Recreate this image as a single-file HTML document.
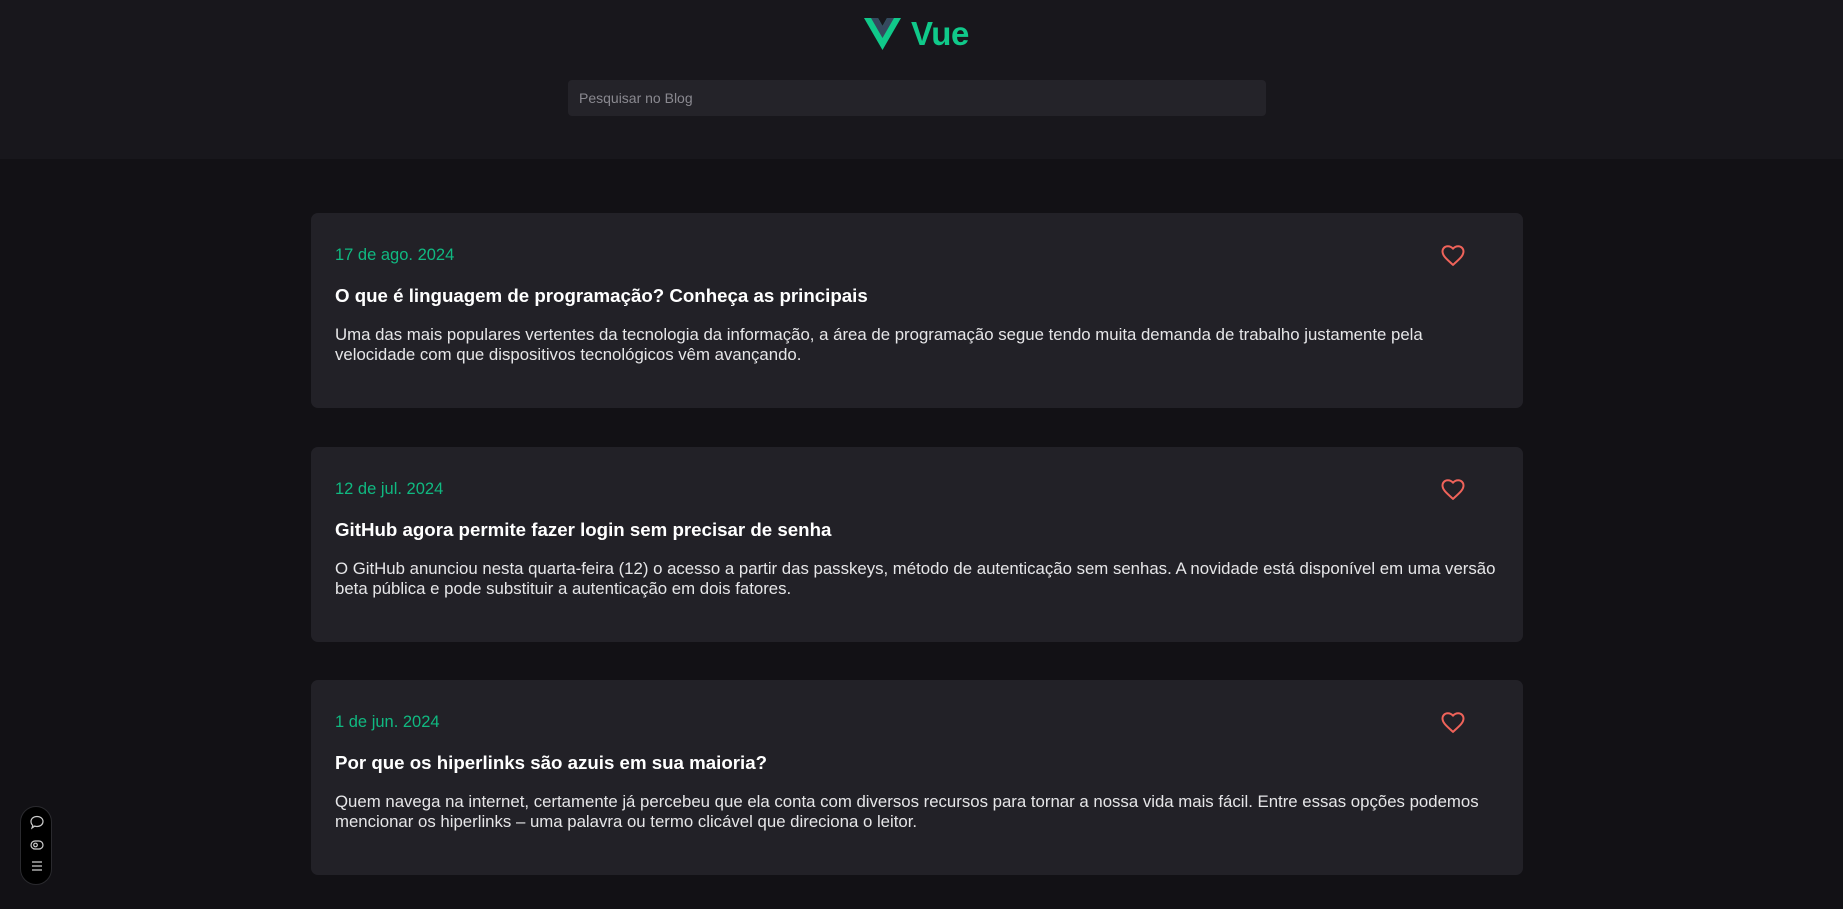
<!DOCTYPE html>
<html><head><meta charset="utf-8"><style>
*{margin:0;padding:0;box-sizing:border-box}
html,body{width:1843px;height:909px;overflow:hidden;background:#121115;font-family:"Liberation Sans",sans-serif}
.hdr{position:absolute;left:0;top:0;width:1843px;height:159px;background:#18171c}
.logo{position:absolute;left:864px;top:18px}
.vue{position:absolute;left:911px;top:15px;font-size:33px;font-weight:bold;color:#10c98a;line-height:38px;letter-spacing:-0.5px}
.search{position:absolute;left:568px;top:80px;width:698px;height:36px;background:#242329;border-radius:4px;color:#8a8990;font-size:14px;line-height:36px;padding-left:11px}
.card{position:absolute;left:311px;width:1212px;height:195px;background:#222127;border-radius:7px;padding:32px 24px}
.date{color:#10b981;font-size:16.5px;line-height:20px;height:20px}
.title{color:#fff;font-weight:bold;font-size:18.7px;line-height:24px;margin-top:19px;white-space:nowrap}
.desc{color:#e6e6e8;font-size:16.8px;line-height:20px;margin-top:17px;white-space:nowrap}
.heart{position:absolute;left:1128px;top:28px}
.fab{position:absolute;left:20px;top:806px;width:32px;height:79px;background:#000;border:1px solid #2a2a2e;border-radius:16px}
</style></head><body>
<div class="hdr">
<svg class="logo" width="37" height="32" viewBox="0 0 37 32"><polygon points="0,0 14,0 18.5,8 23,0 37,0 18.5,32" fill="#10c98a"/><polygon points="7,0 14,0 18.5,8 23,0 30,0 18.5,20" fill="#35495e"/></svg>
<div class="vue">Vue</div>
<div class="search">Pesquisar no Blog</div>
</div>

<div class="card" style="top:213px">
<div class="date">17 de ago. 2024</div>
<div class="title">O que é linguagem de programação? Conheça as principais</div>
<div class="desc">Uma das mais populares vertentes da tecnologia da informação, a área de programação segue tendo muita demanda de trabalho justamente pela<br>velocidade com que dispositivos tecnológicos vêm avançando.</div>
<svg class="heart" width="28" height="28" viewBox="0 0 24 24"><path d="M12 20.5l-1.3-1.2C6 15.1 3 12.4 3 9 3 6.4 5 4.5 7.5 4.5c1.7 0 3.4.8 4.5 2.1 1.1-1.3 2.8-2.1 4.5-2.1C19 4.5 21 6.4 21 9c0 3.4-3 6.1-7.7 10.3z" fill="none" stroke="#f0635a" stroke-width="1.7" stroke-linejoin="round"/></svg>
</div>

<div class="card" style="top:447px">
<div class="date">12 de jul. 2024</div>
<div class="title">GitHub agora permite fazer login sem precisar de senha</div>
<div class="desc">O GitHub anunciou nesta quarta-feira (12) o acesso a partir das passkeys, método de autenticação sem senhas. A novidade está disponível em uma versão<br>beta pública e pode substituir a autenticação em dois fatores.</div>
<svg class="heart" width="28" height="28" viewBox="0 0 24 24"><path d="M12 20.5l-1.3-1.2C6 15.1 3 12.4 3 9 3 6.4 5 4.5 7.5 4.5c1.7 0 3.4.8 4.5 2.1 1.1-1.3 2.8-2.1 4.5-2.1C19 4.5 21 6.4 21 9c0 3.4-3 6.1-7.7 10.3z" fill="none" stroke="#f0635a" stroke-width="1.7" stroke-linejoin="round"/></svg>
</div>

<div class="card" style="top:680px">
<div class="date">1 de jun. 2024</div>
<div class="title">Por que os hiperlinks são azuis em sua maioria?</div>
<div class="desc">Quem navega na internet, certamente já percebeu que ela conta com diversos recursos para tornar a nossa vida mais fácil. Entre essas opções podemos<br>mencionar os hiperlinks – uma palavra ou termo clicável que direciona o leitor.</div>
<svg class="heart" width="28" height="28" viewBox="0 0 24 24"><path d="M12 20.5l-1.3-1.2C6 15.1 3 12.4 3 9 3 6.4 5 4.5 7.5 4.5c1.7 0 3.4.8 4.5 2.1 1.1-1.3 2.8-2.1 4.5-2.1C19 4.5 21 6.4 21 9c0 3.4-3 6.1-7.7 10.3z" fill="none" stroke="#f0635a" stroke-width="1.7" stroke-linejoin="round"/></svg>
</div>

<div class="fab">
<svg width="32" height="79" viewBox="0 0 32 79" fill="none" stroke="#ccc" stroke-width="1.2">
<path d="M10 14.5c0-3 2.7-5 6-5s6 2 6 5-2.7 5-6 5c-.8 0-1.6-.1-2.3-.4L11 21l.8-2.6C10.7 17.4 10 16 10 14.5z"/>
<rect x="10" y="34" width="12" height="8" rx="4"/><circle cx="14.5" cy="38" r="1.8"/>
<path d="M11 55h10M11 59h10M11 63h10"/>
</svg>
</div>
</body></html>
